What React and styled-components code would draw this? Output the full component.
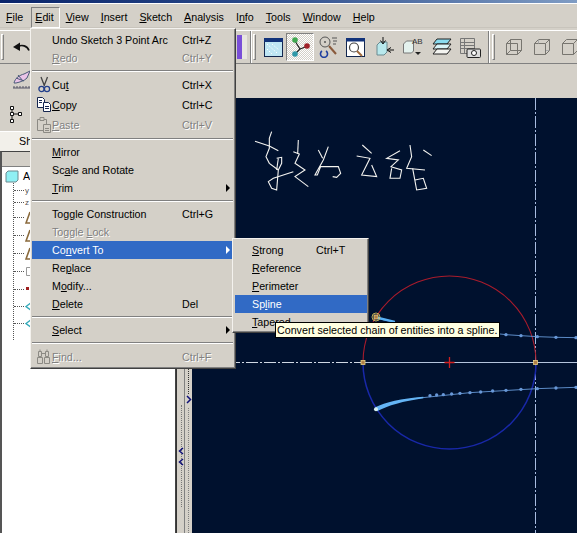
import React from "react";
import styled, { createGlobalStyle } from "styled-components";

const GRAY = "#d4d0c8";
const HILITE = "#316ac5";

const Global = createGlobalStyle`
  html, body { margin: 0; padding: 0; background: ${GRAY}; }
  body { font-family: "Liberation Sans", Arial, sans-serif; font-size: 10.7px; color: #000; }
`;

const Screen = styled.div`
  position: relative;
  width: 577px;
  height: 533px;
  overflow: hidden;
  display: flex;
  flex-direction: column;
  background: ${GRAY};
`;

const TitleStrip = styled.div`
  height: 3px;
  background: linear-gradient(90deg, #0a246a 0%, #2a4a8a 45%, #7f9cc4 100%);
  border-bottom: 1px solid #fff;
`;

const MenuBar = styled.div`
  height: 24px;
  display: flex;
  align-items: center;
  padding-top: 2px;
  box-sizing: border-box;
  padding-left: 6px;
  border-bottom: 1px solid #c8c4bc;
`;

const BarItem = styled.div`
  margin-right: 12px;
  line-height: 18px;
  position: relative;
  ${p => p.$open && `
    &::before {
      content: "";
      position: absolute;
      left: -4px; right: -6px; top: -1px; bottom: -2px;
      border: 1px solid #808080;
      border-right-color: #fff;
      border-bottom-color: #fff;
    }
  `}
`;

const ToolRow = styled.div`
  height: 34px;
  display: flex;
  align-items: center;
  box-sizing: border-box;
  border-top: 1px solid #fff;
  border-bottom: 1px solid #808080;
  margin-top: ${p => p.$top || 0}px;
`;

const EmptyRow = styled.div`
  height: 34px;
  display: flex;
  align-items: center;
`;

const Grip = styled.div`
  width: 3px;
  height: 26px;
  flex: none;
  margin-left: ${p => p.$left || 0}px;
  border: 1px solid #fff;
  border-right-color: #808080;
  border-bottom-color: #808080;
  box-sizing: border-box;
`;

const ToolIcon = styled.svg`
  flex: none;
  display: block;
  margin-left: ${p => p.$left || 0}px;
`;

const CheckedTool = styled.div`
  width: 28px;
  height: 28px;
  flex: none;
  margin-left: ${p => p.$left || 0}px;
  background: repeating-conic-gradient(#fff 0 25%, #d4d0c8 0 50%) 0 0 / 2px 2px;
  border: 1px solid #fff;
  border-top-color: #808080;
  border-left-color: #808080;
  box-sizing: border-box;
  display: flex;
  align-items: center;
  justify-content: center;
`;

const ColorStub = styled.div`
  width: 10px;
  height: 24px;
  flex: none;
  margin-left: ${p => p.$left || 0}px;
  background: linear-gradient(90deg, #7a4fd8 0 50%, #e8e6e0 50%);
`;

const Divider = styled.div`
  width: 2px;
  height: 32px;
  flex: none;
  margin-left: ${p => p.$left || 0}px;
  background: linear-gradient(90deg, #808080 50%, #fff 50%);
`;

const Main = styled.div`
  flex: 1;
  display: flex;
  min-height: 0;
`;

const Panel = styled.div`
  width: 176px;
  flex: none;
  display: flex;
  flex-direction: column;
`;

const PanelTools = styled.div`
  height: 33px;
  padding-left: 8px;
  display: flex;
  align-items: center;
`;

const TabStrip = styled.div`
  height: 20px;
  flex: none;
`;

const Tab = styled.div`
  width: 48px;
  height: 20px;
  padding-left: 19px;
  box-sizing: border-box;
  line-height: 19px;
  background: #f2f0ea;
  border-top: 1px solid #fff;
`;

const TreeFrame = styled.div`
  flex: 1;
  background: #fff;
  border-left: 2px solid #555;
  border-right: 1px solid #444;
  border-top: 1px solid #444;
  display: flex;
  flex-direction: column;
`;

const TreeHeader = styled.div`
  height: 14px;
  flex: none;
  background: ${GRAY};
  border-bottom: 1px solid #808080;
`;

const TreeRoot = styled.div`
  height: 18px;
  display: flex;
  align-items: center;
  padding-left: 3px;
  gap: 4px;
`;

const TreeBranch = styled.div`
  margin-left: 11px;
  margin-top: -2px;
  border-left: 1px dotted #555;
  height: 157px;
  display: flex;
  flex-direction: column;
`;

const TreeRow = styled.div`
  height: ${p => p.$h || 18}px;
  flex: none;
  display: flex;
  align-items: center;
  font-size: 8px;
  color: #555;
  &::before {
    content: "";
    width: 10px;
    margin-right: 1px;
    border-top: 1px dotted #555;
  }
`;

const Splitter = styled.div`
  width: 16px;
  flex: none;
  display: flex;
  border-left: 1px solid #333;
  box-sizing: border-box;
`;

const SplitLeft = styled.div`
  width: 8px;
  border-right: 1px solid #808080;
  position: relative;
`;

const SplitRight = styled.div`
  width: 7px;
  position: relative;
`;

const DotRun = styled.div`
  position: absolute;
  top: ${p => p.$top}px;
  height: ${p => p.$h}px;
  left: ${p => p.$x}px;
  border-left: 1px dotted ${p => p.$c || "#666"};
`;

const Chevron = styled.svg`
  position: absolute;
  left: ${p => p.$x}px;
  top: ${p => p.$y}px;
`;

const Canvas = styled.div`
  flex: 1;
  background: #00112e;
  overflow: hidden;
`;

const MenuBox = styled.div`
  position: absolute;
  box-sizing: border-box;
  left: ${p => p.$x}px;
  top: ${p => p.$y}px;
  width: ${p => p.$w}px;
  height: ${p => p.$h}px;
  padding: ${p => p.$padding};
  background: ${GRAY};
  border: 1px solid;
  border-color: #f4f2ee #404040 #404040 #f4f2ee;
  box-shadow: inset -1px -1px 0 #808080;
`;

const Row = styled.div`
  position: relative;
  height: ${p => p.$h || 18}px;
  line-height: ${p => p.$h || 18}px;
  display: flex;
  align-items: center;
  padding-left: ${p => p.$pad}px;
  background: ${p => (p.$active ? HILITE : "transparent")};
  color: ${p => (p.$active ? "#fff" : p.$off ? "#808080" : "#000")};
  text-shadow: ${p => (p.$off ? "1px 1px 0 #fff" : "none")};
  white-space: nowrap;
`;

const Label = styled.span`
  width: ${p => p.$w}px;
  flex: none;
`;

const RowIcon = styled.svg`
  position: absolute;
  left: 3px;
  top: 1px;
`;

const Arrow = styled.span`
  position: absolute;
  right: ${p => p.$right}px;
  top: 5px;
  border-left: 4px solid ${p => (p.$active ? "#fff" : "#000")};
  border-top: 4px solid transparent;
  border-bottom: 4px solid transparent;
`;

const Sep = styled.div`
  height: 8px;
  display: flex;
  align-items: center;
  &::after {
    content: "";
    flex: 1;
    height: 2px;
    background: linear-gradient(#808080 50%, #fff 50%);
  }
`;

const Tooltip = styled.div`
  position: absolute;
  left: 275px;
  top: 322px;
  height: 16px;
  line-height: 15px;
  padding: 0 2px 0 1px;
  box-sizing: border-box;
  background: #ffffe1;
  border: 1px solid #000;
  white-space: nowrap;
`;

const Mn = ({ text, at }) =>
  at == null ? (
    text
  ) : (
    <>
      {text.slice(0, at)}
      <u>{text[at]}</u>
      {text.slice(at + 1)}
    </>
  );

const barItems = [
  ["File", 0], ["Edit", 0], ["View", 0], ["Insert", 0], ["Sketch", 0],
  ["Analysis", 0], ["Info", 1], ["Tools", 0], ["Window", 0], ["Help", 0],
];

const ScissorsIcon = () => (
  <RowIcon width="18" height="18" viewBox="0 0 18 18" fill="none">
    <path d="M6 1l3.500 9M12.500 1L9 10" stroke="#444" strokeWidth="1.300" />
    <circle cx="6.500" cy="13" r="2.600" stroke="#23408c" strokeWidth="1.300" />
    <circle cx="12" cy="13" r="2.600" stroke="#23408c" strokeWidth="1.300" />
  </RowIcon>
);

const CopyIcon = () => (
  <RowIcon width="18" height="18" viewBox="0 0 18 18" fill="none">
    <path d="M2.500 1.500h5l2 2v8h-7z" fill="#fff" stroke="#16264f" />
    <path d="M8.500 6.500h5l2 2v7h-7z" fill="#fff" stroke="#16264f" />
    <path d="M10 10.500h4M10 12.500h4M4 4.500h3M4 6.500h3" stroke="#16264f" />
  </RowIcon>
);

const PasteIcon = () => (
  <RowIcon width="18" height="18" viewBox="0 0 18 18" fill="none">
    <path d="M2.500 3.500h9v11h-9z" stroke="#8c8a84" />
    <path d="M5 1.500h4v3H5z" fill={GRAY} stroke="#8c8a84" />
    <path d="M8.500 8.500h7v8h-7z" fill={GRAY} stroke="#8c8a84" />
    <path d="M10 12.500h4M10 14.500h4" stroke="#8c8a84" />
  </RowIcon>
);

const FindIcon = () => (
  <RowIcon width="18" height="18" viewBox="0 0 18 18" fill="none" stroke="#8c8a84">
    <path d="M3.500 3.500h3v5h-3zM10.500 3.500h3v5h-3zM6.500 5.500h4" />
    <path d="M2.500 9.500h5v6h-5zM9.500 9.500h5v6h-5z" />
    <path d="M5 1.500v2M12 1.500v2" />
  </RowIcon>
);

const editMenu = [
  { label: "Undo Sketch 3 Point Arc", key: "Ctrl+Z" },
  { label: "Redo", at: 0, key: "Ctrl+Y", off: true },
  "sep",
  { label: "Cut", at: 2, key: "Ctrl+X", h: 20, icon: <ScissorsIcon /> },
  { label: "Copy", at: 0, key: "Ctrl+C", h: 20, icon: <CopyIcon /> },
  { label: "Paste", at: 0, key: "Ctrl+V", h: 20, off: true, icon: <PasteIcon /> },
  "sep",
  { label: "Mirror", at: 0 },
  { label: "Scale and Rotate", at: 2 },
  { label: "Trim", at: 0, sub: true },
  "sep",
  { label: "Toggle Construction", at: 3, key: "Ctrl+G" },
  { label: "Toggle Lock", at: 7, off: true },
  { label: "Convert To", at: 2, sub: true, active: true },
  { label: "Replace", at: 2 },
  { label: "Modify...", at: 1 },
  { label: "Delete", at: 0, key: "Del" },
  "sep",
  { label: "Select", at: 0, sub: true },
  "sep",
  { label: "Find...", at: 0, key: "Ctrl+F", h: 20, off: true, icon: <FindIcon /> },
];

const convertMenu = [
  { label: "Strong", at: 0, key: "Ctrl+T" },
  { label: "Reference", at: 0 },
  { label: "Perimeter", at: 0 },
  { label: "Spline", at: 2, active: true },
  { label: "Tapered", at: 0 },
];

const MenuRows = ({ items, pad, labelW, arrowRight }) =>
  items.map((it, i) =>
    it === "sep" ? (
      <Sep key={i} />
    ) : (
      <Row key={i} $h={it.h} $pad={pad} $active={it.active} $off={it.off}>
        {it.icon}
        <Label $w={labelW}>
          <Mn text={it.label} at={it.at} />
        </Label>
        {it.key}
        {it.sub && <Arrow $right={arrowRight} $active={it.active} />}
      </Row>
    )
  );

const Wire = ({ left }) => (
  <ToolIcon $left={left} width="18" height="18" viewBox="0 0 18 18" fill="none" stroke="#77756f">
    <path d="M1.500 5.500h11v11h-11zM1.500 5.500l4-4h11v11l-4 4" />
    <path d="M5.500 1.500v11h11M5.500 12.500l-4 4" />
  </ToolIcon>
);

const HalfWire = ({ left, solid }) => (
  <ToolIcon $left={left} width="18" height="18" viewBox="0 0 18 18" fill="none" stroke="#77756f">
    <path d="M1.500 5.500h11v11h-11zM1.500 5.500l4-4h11v11l-4 4M12.500 5.500l4-4" />
    {!solid && <path d="M5.500 1.500v4M13 12.500h3" stroke="#aaa" />}
  </ToolIcon>
);

const WarnIcon = () => (
  <svg width="9" height="13" viewBox="0 0 9 13" fill="none">
    <path d="M5 1L1 12h7" stroke="#8a6a3c" strokeWidth="1.600" />
  </svg>
);

const treeGlyphs = [
  <WarnIcon />, <WarnIcon />, <WarnIcon />,
  <svg width="8" height="11" viewBox="0 0 8 11" fill="none"><path d="M1.500 1.500h5v8h-5z" stroke="#999" /></svg>,
  <svg width="6" height="6" viewBox="0 0 6 6"><rect x="1" y="1" width="3" height="3" fill="#a02020" /></svg>,
  <svg width="9" height="11" viewBox="0 0 9 11" fill="none"><path d="M7 1L1 5.500 7 10" stroke="#30a8b8" strokeWidth="1.400" /></svg>,
  <svg width="9" height="11" viewBox="0 0 9 11" fill="none"><path d="M7 1L1 5.500 7 10" stroke="#30a8b8" strokeWidth="1.400" /></svg>,
];

const handwriting = [
  "M75 424L118 438L145 452",
  "M125 395L118 415L118 445L108 470L118 490L145 510",
  "M140 475L155 472L155 490L145 510L140 570L125 565L115 545L130 535L190 515",
  "M145 475L140 510",
  "M205 420L203 462",
  "M190 455L208 462L195 490L225 510L195 530L235 560",
  "M295 440L280 480L255 525L262 525L272 500L325 500L332 520L320 532L308 530",
  "M265 450L278 475",
  "M397 435L425 460",
  "M380 468L420 475L395 525L440 530L425 495",
  "M510 452L470 475L505 480L483 500L515 510L510 535L480 535L485 505",
  "M540 435L545 470L530 505L585 510",
  "M548 505L560 570L590 565L580 535L555 540",
  "M580 450L605 467",
];

const upperDots = [[828, 314], [873, 317], [922, 320], [978, 322], [1038, 323]];
const lowerDots = [
  [600, 497], [620, 495], [640, 494], [665, 492], [690, 490], [720, 488], [752, 486],
  [788, 483], [828, 481], [873, 478], [922, 476], [978, 474], [1038, 472],
];

const Point = ({ x, y }) => (
  <rect x={x - 2} y={y - 2} width="4" height="4" fill="#b08048" stroke="#e8d080" strokeWidth="0.800" />
);

const Sketch = () => (
  <svg width="385" height="435" viewBox="192 98 385 435" style={{ display: "block" }}>
    <g transform="translate(230 0) scale(0.3333)" fill="none" stroke="#f4f4f0" strokeWidth="3.300">
      {handwriting.map((d, i) => <path key={i} d={d} />)}
    </g>
    <line x1="535.500" y1="98" x2="535.500" y2="533" stroke="#a8bce0" strokeDasharray="12 2 2 2" />
    <line x1="192" y1="362.500" x2="363" y2="362.500" stroke="#d0d8e4" strokeDasharray="12 2 2 2" />
    <line x1="363" y1="362.500" x2="577" y2="362.500" stroke="#b4c4dc" />
    <path d="M363 362.500A86.500 86.500 0 0 1 536 362.500" fill="none" stroke="#a81c2c" strokeWidth="1.100" />
    <path d="M363 362.500A86.500 86.500 0 0 0 536 362.500" fill="none" stroke="#1828a8" strokeWidth="1.500" />
    <path d="M444.500 362.500h10M449.500 357v11" stroke="#d02020" strokeWidth="1.300" />
    <g transform="translate(230 230) scale(0.3333)">
      <path d="M437 262Q460 272 500 278L828 314L873 317L922 320L978 322L1038 323" fill="none" stroke="#6ea4e4" strokeWidth="2.500" />
      <path d="M437 258L495 272L495 278L437 266z" fill="#58b0f4" />
      <path d="M438 538Q480 515 560 505L720 488L922 476L1038 472" fill="none" stroke="#6ea4e4" strokeWidth="2.500" />
      <path d="M436 532Q480 508 580 500L580 505Q490 518 441 544z" fill="#64b4f4" />
      {upperDots.concat(lowerDots).map(([x, y], i) => <circle key={i} cx={x} cy={y} r="5" fill="#6898d8" />)}
      <circle cx="438" cy="538" r="6" fill="#d8f0f0" />
    </g>
    <Point x={363} y={362.500} />
    <Point x={535.500} y={362.500} />
    <Point x={376} y={317} />
    <circle cx="376" cy="317" r="4" fill="none" stroke="#e8d060" strokeWidth="0.800" />
  </svg>
);

export default function App() {
  return (
    <Screen>
      <Global />
      <TitleStrip />
      <MenuBar>
        {barItems.map(([t, at]) => (
          <BarItem key={t} $open={t === "Edit"}>
            <Mn text={t} at={at} />
          </BarItem>
        ))}
      </MenuBar>
      <ToolRow $top={2}>
        <Grip $left={1} />
        <ToolIcon $left={8} width="18" height="16" viewBox="0 0 18 16" fill="none">
          <path d="M1 8l7-4.500V12z" fill="#111" />
          <path d="M6 7.500c4-2 9-1 11 4" stroke="#111" strokeWidth="1.600" />
        </ToolIcon>
        <ColorStub $left={207} />
        <Divider $left={3} />
        <Grip $left={1} />
        <ToolIcon $left={8} width="19" height="19" viewBox="0 0 19 19">
          <rect x="0.500" y="0.500" width="18" height="18" fill="#bfe6f4" stroke="#12264e" />
          <rect x="0" y="0" width="19" height="4" fill="#12337a" />
          <path d="M3 6l10 9M8 6l7 6M3 11l5 5" stroke="#fff" strokeDasharray="1.500 1.500" />
        </ToolIcon>
        <CheckedTool $left={3}>
          <svg width="20" height="22" viewBox="0 0 20 22" fill="none">
            <path d="M5 5l5 8 8-3M10 13l-5 5" stroke="#222" strokeWidth="1.200" />
            <circle cx="5" cy="4" r="2.800" fill="#40a850" />
            <circle cx="17" cy="10" r="2.800" fill="#a02028" />
            <circle cx="5" cy="18" r="2.800" fill="#3098a8" />
          </svg>
        </CheckedTool>
        <ToolIcon $left={4} width="20" height="22" viewBox="0 0 20 22" fill="none">
          <circle cx="7" cy="6" r="5" stroke="#555" />
          <circle cx="7" cy="6" r="1" fill="#555" />
          <path d="M11 10l7 8" stroke="#8a5a3c" strokeWidth="2" />
          <path d="M14 2h5M15 5h4M15 8h3" stroke="#555" />
          <path d="M4 15a3.500 3.500 0 1 0 4 0" stroke="#2040a0" strokeWidth="1.600" />
        </ToolIcon>
        <ToolIcon $left={8} width="19" height="19" viewBox="0 0 19 19" fill="none">
          <rect x="0.500" y="0.500" width="18" height="18" fill="#fff" stroke="#12264e" />
          <rect x="0" y="0" width="19" height="3.500" fill="#12337a" />
          <circle cx="8" cy="9.500" r="4.500" stroke="#444" strokeWidth="1.200" />
          <path d="M11 13l5 5" stroke="#a06a3c" strokeWidth="2" />
        </ToolIcon>
        <ToolIcon $left={10} width="19" height="20" viewBox="0 0 19 20" fill="none">
          <path d="M2 8l3-3h7v10l-3 3H2z" fill="#b8e8ec" stroke="#6a8a90" />
          <path d="M8 0v6M5.500 3.500L8 7l2.500-3.500" stroke="#111" />
          <path d="M19 13h-6M16 10.500L12 13l4 2.500" stroke="#111" />
        </ToolIcon>
        <ToolIcon $left={8} width="22" height="20" viewBox="0 0 22 20" fill="none">
          <path d="M1.500 7l3-3h7v10l-2 2h-8z" fill="#e4f2ee" stroke="#777" />
          <text x="10" y="7" fontSize="8" fontFamily="Liberation Sans" fill="#333">AB</text>
          <path d="M13 15h6l-3 3z" fill="#222" />
        </ToolIcon>
        <ToolIcon $left={8} width="20" height="18" viewBox="0 0 20 18" stroke="#222">
          <path d="M5 1h14l-4 5H1z" fill="#8adcf0" />
          <path d="M5 6h14l-4 5H1z" fill="#d8f4f8" />
          <path d="M5 11h14l-4 5H1z" fill="#f4f4f0" />
        </ToolIcon>
        <ToolIcon $left={8} width="21" height="21" viewBox="0 0 21 21" fill="none">
          <path d="M0.500 1.500h14v15h-14zM0.500 5.500h14M0.500 8.500h14M0.500 11.500h14M4.500 1.500v15" stroke="#777" />
          <rect x="7" y="12" width="13.500" height="8.500" rx="1" fill="#ddd" stroke="#222" />
          <circle cx="14" cy="16" r="2.500" fill="#fff" stroke="#222" />
        </ToolIcon>
        <Divider $left={7} />
        <Grip $left={2} />
        <Wire left={10} />
        <HalfWire left={10} />
        <HalfWire left={10} solid />
      </ToolRow>
      <EmptyRow>
        <ToolIcon $left={12} width="20" height="22" viewBox="0 0 20 22" fill="none">
          <path d="M2 13c1-5 6-8 10-9l6-3-3 7c-3 3-7 4-11 5z" fill="#eac4e8" stroke="#4a5a78" />
          <path d="M4 8l8 3M6 5l5 6" stroke="#4a5a78" />
          <path d="M1 18h18" stroke="#556" />
          <path d="M2 16v2M5 16v2M8 16v2M11 16v2M14 16v2M17 16v2" stroke="#556" />
        </ToolIcon>
      </EmptyRow>
      <Main>
        <Panel>
          <PanelTools>
            <svg width="16" height="19" viewBox="0 0 16 19" fill="none" stroke="#111">
              <path d="M2.500 1.500h3v3h-3zM2.500 7.500h3v3h-3zM2.500 14.500h3v3h-3zM10.500 7.500h3v3h-3z" fill="#fff" />
              <path d="M4 4.500v3M4 10.500v4M5.500 9h5" />
            </svg>
          </PanelTools>
          <TabStrip>
            <Tab>Sh</Tab>
          </TabStrip>
          <TreeFrame>
            <TreeHeader />
            <TreeRoot>
              <svg width="14" height="13" viewBox="0 0 14 13">
                <path d="M1 3l2-2h10v9l-2 2H1z" fill="#8ff0f4" stroke="#6a8a90" />
              </svg>
              <span>A</span>
            </TreeRoot>
            <TreeBranch>
              <TreeRow $h={14}>y</TreeRow>
              <TreeRow $h={11}>z</TreeRow>
              {treeGlyphs.map((g, i) => (
                <TreeRow key={i} $h={i > 4 ? 17 : 18}>{g}</TreeRow>
              ))}
            </TreeBranch>
          </TreeFrame>
        </Panel>
        <Splitter>
          <SplitLeft>
            <DotRun $x={4} $top={307} $h={102} $c="#777" />
            <Chevron $x={1} $y={349} width="6" height="8" viewBox="0 0 6 8" fill="none">
              <path d="M5 1L1.500 4 5 7" stroke="#101078" strokeWidth="1.500" />
            </Chevron>
            <Chevron $x={1} $y={360} width="6" height="8" viewBox="0 0 6 8" fill="none">
              <path d="M5 1L1.500 4 5 7" stroke="#101078" strokeWidth="1.500" />
            </Chevron>
          </SplitLeft>
          <SplitRight>
            <DotRun $x={3} $top={0} $h={296} $c="#333" />
            <Chevron $x={0} $y={297} width="7" height="9" viewBox="0 0 7 9" fill="none">
              <path d="M2 1l3.500 3.500L2 8" stroke="#101078" strokeWidth="1.500" />
            </Chevron>
            <DotRun $x={3} $top={310} $h={125} $c="#808080" />
          </SplitRight>
        </Splitter>
        <Canvas>
          <Sketch />
        </Canvas>
      </Main>

      <MenuBox $x={30} $y={28} $w={206} $h={341} $padding="2px 2px 2px 1px">
        <MenuRows items={editMenu} pad={20} labelW={130} arrowRight={3} />
      </MenuBox>
      <MenuBox $x={232} $y={238} $w={137} $h={95} $padding="2px 1px 2px 2px">
        <MenuRows items={convertMenu} pad={17} labelW={64} arrowRight={3} />
      </MenuBox>
      <Tooltip>Convert selected chain of entities into a spline.</Tooltip>
    </Screen>
  );
}
